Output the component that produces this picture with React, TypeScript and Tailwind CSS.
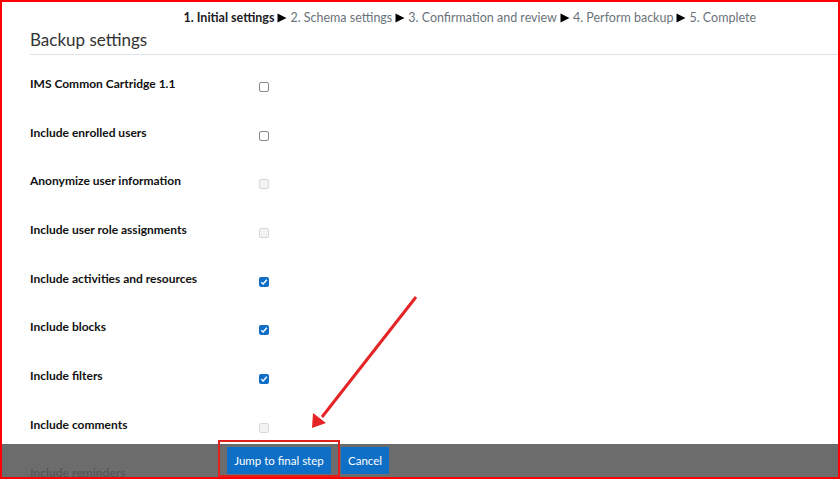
import React from 'react';

type CheckState = 'off' | 'on' | 'disabled';

const settings: { label: string; state: CheckState }[] = [
  { label: 'IMS Common Cartridge 1.1', state: 'off' },
  { label: 'Include enrolled users', state: 'off' },
  { label: 'Anonymize user information', state: 'disabled' },
  { label: 'Include user role assignments', state: 'disabled' },
  { label: 'Include activities and resources', state: 'on' },
  { label: 'Include blocks', state: 'on' },
  { label: 'Include filters', state: 'on' },
  { label: 'Include comments', state: 'disabled' },
  { label: 'Include reminders', state: 'disabled' },
];

const steps = [
  '2. Schema settings',
  '3. Confirmation and review',
  '4. Perform backup',
  '5. Complete',
];

const Checkbox: React.FC<{ state: CheckState }> = ({ state }) => {
  if (state === 'on') {
    return (
      <span className="block w-[10px] h-[10px] rounded-[2px] bg-[#0f6fc6] flex items-center justify-center">
        <svg width="8" height="8" viewBox="0 0 8 8">
          <path d="M1.3 4.2 L3.2 6 L6.8 1.8" fill="none" stroke="#fff" strokeWidth="1.4" />
        </svg>
      </span>
    );
  }
  if (state === 'disabled') {
    return <span className="block w-[10px] h-[10px] rounded-[2px] border border-[#d9d9d9] bg-[#f3f3f3]" />;
  }
  return <span className="block w-[10px] h-[10px] rounded-[2px] border border-[#8a8a8a] bg-white" />;
};

const App: React.FC = () => {
  return (
    <div
      className="relative w-[840px] h-[479px] overflow-hidden bg-white border-2 border-[#ff0000] text-[#111]"
      style={{ fontFamily: 'Lato, "Open Sans", sans-serif' }}
    >
      {/* Step trail */}
      <div className="mt-[6px] h-[20px] flex items-center justify-end pr-[82px] text-[12.5px] text-[#6a737b] gap-[3px]">
        <span className="font-bold text-[#1d2125]">1. Initial settings</span>
        {steps.map((s) => (
          <React.Fragment key={s}>
            <svg width="10" height="10" viewBox="0 0 10 10">
              <polygon points="0.5,0.5 9.5,5 0.5,9.5" fill="#000" />
            </svg>
            <span>{s}</span>
          </React.Fragment>
        ))}
      </div>

      <div className="ml-[28px] pb-[2px] border-b border-[#dee2e6]">
        <h2 className="text-[17px] leading-[24px] text-[#333]">Backup settings</h2>
      </div>

      <div className="mt-[19px] ml-[28px]">
        {settings.map((s) => (
          <div key={s.label} className="h-[48.67px] flex items-start">
            <div className="w-[229px] text-[12px] leading-[20px] font-bold">{s.label}</div>
            <div className="pt-[8px]">
              <Checkbox state={s.state} />
            </div>
          </div>
        ))}
      </div>

      {/* Sticky action bar */}
      <div className="absolute left-0 right-0 bottom-0 h-[33px] bg-[rgba(93,93,93,0.91)] flex items-start pt-[3px] pl-[225px] gap-[10px]">
        <button className="h-[27px] w-[104px] bg-[#0f6fc6] text-white text-[11.5px]">Jump to final step</button>
        <button className="h-[27px] w-[48px] bg-[#0f6fc6] text-white text-[11.5px]">Cancel</button>
      </div>

      {/* Highlight box and arrow */}
      <div className="absolute left-[216px] top-[438px] w-[122px] h-[37px] border-2 border-[#e0201f]" />
      <svg className="absolute left-0 top-0" width="840" height="479" viewBox="0 0 840 479">
        <line x1="414" y1="295" x2="320" y2="415" stroke="#e52426" strokeWidth="3" />
        <polygon points="310,426 311,411 324,421" fill="#e52426" />
      </svg>
    </div>
  );
};

export default App;
